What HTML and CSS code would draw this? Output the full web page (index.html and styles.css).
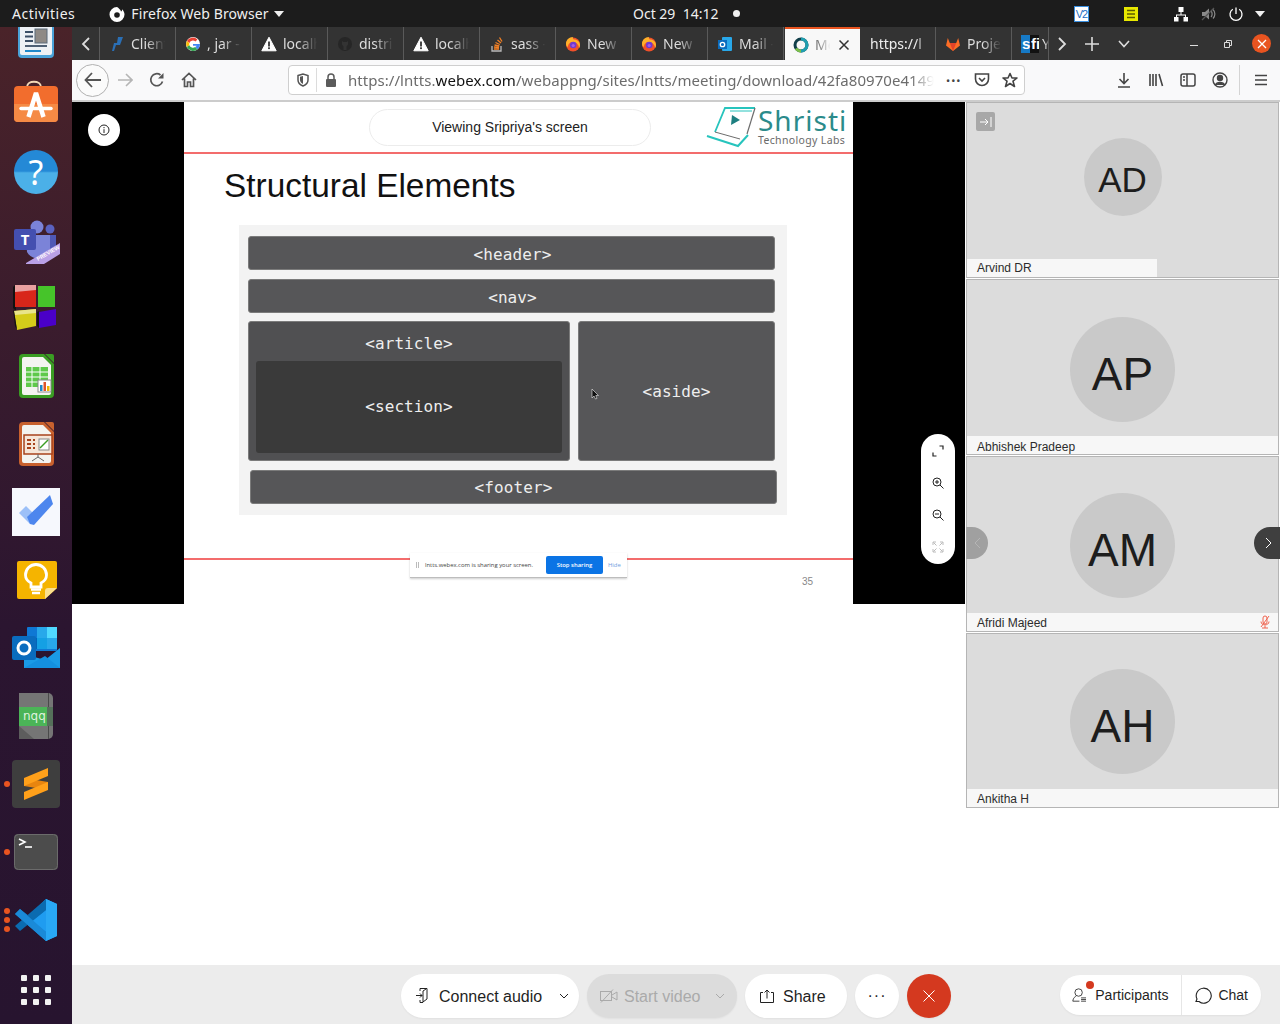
FILE: index.html
```html
<!DOCTYPE html>
<html lang="en">
<head>
<meta charset="utf-8">
<title>Webex meeting</title>
<link rel="stylesheet" href="styles.css">
</head>
<body>
<svg class="defs" width="0" height="0">
  <defs>
    <symbol id="warn" viewBox="0 0 16 16"><path d="M8 1.2 15.2 14.8H.8Z" fill="#fff" stroke="#fff" stroke-linejoin="round"/><rect x="7.1" y="5.5" width="1.8" height="5" fill="#333"/><rect x="7.1" y="11.3" width="1.8" height="1.8" fill="#333"/></symbol>
    <symbol id="fox" viewBox="0 0 16 16"><circle cx="8" cy="8.500" r="7" fill="#f0502a"/><path d="M1 8C1 4 4 1 8 1 7.500 2 8 3 9 3.500 12.500 3.500 15 6 15 9 15 10 14.800 11 14.300 12 13.500 8 11 6 8 6 5 6 3 8 3 11 1.800 10.500 1 9.500 1 8Z" fill="#ffb02a"/><circle cx="8.200" cy="9" r="3.300" fill="#6f3bd0"/><circle cx="8.200" cy="9.500" r="1.600" fill="#a55ce6"/></symbol>
    <symbol id="doc" viewBox="0 0 48 48"><path d="M11 2H32L42 12V42a4 4 0 0 1-4 4H11a4 4 0 0 1-4-4V6a4 4 0 0 1 4-4Z" fill="currentColor"/><path d="M11 5H31L39 13V41a2 2 0 0 1-2 2H12a2 2 0 0 1-2-2V7a2 2 0 0 1 2-2Z" fill="#f4f4f0"/><path d="M33 2H40a2 2 0 0 1 2 2V11Z" fill="currentColor"/></symbol>
  </defs>
</svg>
<div class="screen">
  <header class="topbar">
    <div class="top-left">
      <span class="top-text activities">Activities</span>
      <svg class="top-fox" width="16" height="16" viewBox="0 0 16 16"><path d="M8 1a7.500 7.500 0 1 0 7.500 7.500c0-2-1-4-2.500-5.300.3 1-.2 2-1 2.300C11.500 3.500 9.500 2 8 1Z" fill="#fff"/><circle cx="8" cy="9" r="2.800" fill="#1c1c1c"/></svg>
      <span class="top-text firefox-name">Firefox Web Browser</span>
      <span class="caret"></span>
    </div>
    <div class="top-center">
      <span class="top-text">Oct 29&nbsp; 14:12</span>
      <span class="rec-dot"></span>
    </div>
    <div class="top-right">
      <span class="tray-v2">V2</span>
      <svg class="tray-note" width="16" height="16" viewBox="0 0 16 16"><rect x="1" y="1" width="14" height="14" fill="#e8e800"/><path d="M4 4.500H12M4 8H12M4 11.500H12" stroke="#5c5c00" stroke-width="1.300"/></svg>
      <svg class="tray-net" width="16" height="16" viewBox="0 0 16 16" fill="#fff"><rect x="5.500" y="1" width="5" height="5"/><rect x="1" y="11" width="4.500" height="4.500"/><rect x="10.500" y="11" width="4.500" height="4.500"/><path d="M7.500 6h1v2.500H13V11h-1V9.500H4V11H3V8.500h4.500Z"/></svg>
      <svg class="tray-vol" width="16" height="16" viewBox="0 0 16 16"><path d="M1 6h3l4-3.500v11L4 10H1Z" fill="#8a8a8a"/><path d="M10 5c1.500 1.500 1.500 4.500 0 6M12 3.500c2.500 2.500 2.500 6.500 0 9" stroke="#8a8a8a" fill="none" stroke-width="1.200"/><path d="M1 14 13 2" stroke="#555" stroke-width="1.200"/></svg>
      <svg class="tray-pow" width="16" height="16" viewBox="0 0 16 16" fill="none" stroke="#fff" stroke-width="1.300"><path d="M8 1.500V8"/><path d="M4.800 3.300a6 6 0 1 0 6.400 0"/></svg>
      <span class="caret tray-caret"></span>
    </div>
  </header>

  <div class="desktop">
    <nav class="dock">
      <div class="dock-item"><svg width="48" height="48" viewBox="0 0 48 48"><rect x="6" y="-4" width="36" height="50" rx="4" fill="#4aa3d9"/><rect x="8" y="-4" width="32" height="47" rx="2" fill="#eef1f5"/><path d="M13 20H21M13 24.500H21M13 29H21" stroke="#3c4f66" stroke-width="1.800"/><rect x="23" y="17" width="12" height="14" fill="#8f8a86" stroke="#5a6a7a"/><path d="M13 34H35" stroke="#3c4f66" stroke-width="1.800"/><path d="M13 39H29" stroke="#1f88c9" stroke-width="2"/></svg></div>
      <div class="dock-item"><svg width="48" height="48" viewBox="0 0 48 48"><path d="M15 7C15 0 29 0 29 7" stroke="#f2d9b8" stroke-width="2" fill="none"/><rect x="2" y="6" width="44" height="36" rx="4" fill="#f26d2d"/><path d="M2 24H46V38a4 4 0 0 1-4 4H6a4 4 0 0 1-4-4Z" fill="#f58a45"/><path d="M16.500 37 24 13 31.500 37" stroke="#fff" stroke-width="4.500" fill="none" stroke-linejoin="bevel"/><path d="M9 28.500H39" stroke="#fff" stroke-width="3.500" stroke-linecap="round"/></svg></div>
      <div class="dock-item"><div class="help-icon">?</div></div>
      <div class="dock-item"><svg width="48" height="48" viewBox="0 0 48 48"><circle cx="25" cy="11" r="6.500" fill="#7b83d8"/><circle cx="38" cy="13" r="4.500" fill="#5a62c0"/><path d="M32 19H44V34L36 38Z" fill="#4f58b5"/><path d="M14 19H38V34C38 44 20 46 15 36Z" fill="#7b83d8"/><rect x="2" y="13" width="22" height="21" rx="2" fill="#444fb0"/><text class="dock-t" x="13" y="29" text-anchor="middle">T</text><path d="M14 47 48 27V38L32 48H14Z" fill="#b9a0e6"/><text class="dock-preview" transform="translate(26 45) rotate(-30)">PREVIEW</text></svg></div>
      <div class="dock-item"><svg width="48" height="48" viewBox="0 0 48 48"><path d="M1 3 3 1 4 27 1 24Z" fill="#111"/><rect x="3" y="1" width="21" height="22" fill="#d8261a"/><path d="M3 1H24V6L3 8Z" fill="#e9a0a0"/><rect x="26" y="2" width="17" height="21" fill="#46c42a"/><path d="M2 27 24 25V42L5 46Z" fill="#d4cc1a"/><path d="M2 27 24 25V29L3 31Z" fill="#e8e48a"/><path d="M1 25 2 27 5 46 3 42Z" fill="#111"/><path d="M25 28 27 27V44L25 42Z" fill="#111"/><path d="M27 28 44 25V41L27 44Z" fill="#4a00c8"/></svg></div>
      <div class="dock-item dock-calc"><svg width="48" height="48" viewBox="0 0 48 48"><use href="#doc"/><g fill="#5fc94a"><rect x="14" y="15" width="22" height="20"/></g><path d="M14 20H36M14 25H36M14 30H36M20 15V35M28 15V35" stroke="#fff"/><rect x="26" y="28" width="13" height="12" fill="#fff" stroke="#888"/><rect x="28" y="33" width="2.500" height="6" fill="#1f88c9"/><rect x="31.500" y="30" width="2.500" height="9" fill="#e0552b"/><rect x="35" y="34" width="2.500" height="5" fill="#f0b400"/></svg></div>
      <div class="dock-item dock-impress"><svg width="48" height="48" viewBox="0 0 48 48"><use href="#doc"/><rect x="12" y="15" width="28" height="19" fill="#f6e6d8" stroke="#a8431c" stroke-width="1.500"/><path d="M15 20H19M15 24H19M15 28H19M21 20H23M21 24H23M21 28H23" stroke="#a8431c" stroke-width="2"/><rect x="27" y="19" width="10" height="11" fill="#fff" stroke="#888"/><path d="M28 28 32 24 36 20" stroke="#3a9d23" stroke-width="1.500" fill="none"/><path d="M26 34V37M26 37 20 41M26 37 32 41" stroke="#666"/></svg></div>
      <div class="dock-item"><svg width="48" height="48" viewBox="0 0 48 48"><rect width="48" height="48" fill="#f6f8fd"/><path d="M7 25 14 18 25 29 18 36Z" fill="#9cc0f8"/><path d="M15 29 38 7 41 16 22 37 18 36Z" fill="#4d86ee"/></svg></div>
      <div class="dock-item"><svg width="48" height="48" viewBox="0 0 48 48"><path d="M7 5H43a2 2 0 0 1 2 2V32L33 43H7a2 2 0 0 1-2-2V7a2 2 0 0 1 2-2Z" fill="#f5b400"/><path d="M45 32H36a3 3 0 0 0-3 3V43Z" fill="#fbe08e"/><path d="M19 31V27C15 25 13.500 21.500 13.500 19A10.500 10.500 0 0 1 34.500 19C34.500 21.500 33 25 29 27V31Z" fill="none" stroke="#fff" stroke-width="2.800"/><path d="M19 33.500H29M20 37H28" stroke="#fff" stroke-width="2.500"/></svg></div>
      <div class="dock-item"><svg width="48" height="48" viewBox="0 0 48 48"><rect x="15" y="3" width="30" height="24" rx="1" fill="#0f78d4"/><rect x="25" y="3" width="10" height="11" fill="#28a8ea"/><rect x="35" y="3" width="10" height="11" fill="#50d9ff"/><rect x="15" y="14" width="10" height="11" fill="#0364b8"/><rect x="25" y="14" width="10" height="11" fill="#14a0e4"/><rect x="35" y="14" width="10" height="11" fill="#28a8ea"/><path d="M12 30 33 36 48 24V44H12Z" fill="#1a9be6"/><path d="M12 44 33 32 48 44Z" fill="#1490df"/><rect x="0" y="12" width="24" height="24" rx="2" fill="#0a6cbe"/><circle cx="12" cy="24" r="6" fill="none" stroke="#fff" stroke-width="3"/></svg></div>
      <div class="dock-item"><svg width="48" height="48" viewBox="0 0 48 48"><path d="M7 1H36A5 5 0 0 1 41 6V42A5 5 0 0 1 36 47H7Z" fill="#757575"/><path d="M7 34 22 47H7Z" fill="#5d5d5d"/><rect x="36" y="1" width="1" height="46" fill="#4a4a4a"/><rect x="7" y="15" width="34" height="19" fill="#4bb457"/><rect x="35" y="15" width="6" height="19" fill="#55705a"/><text class="dock-nqq" x="11" y="28">nqq</text></svg></div>
      <div class="dock-item"><svg width="48" height="48" viewBox="0 0 48 48"><rect width="48" height="48" rx="4" fill="#3e3e3e"/><path d="M12 18 12 26 36 30 36 22Z" fill="#e8850f"/><path d="M36 8 12 18V26L36 16Z" fill="#ffa01a"/><path d="M36 22 12 32V40L36 30Z" fill="#ffa01a"/></svg><span class="run-dot"></span></div>
      <div class="dock-item"><svg width="48" height="48" viewBox="0 0 48 48"><rect x="2" y="6" width="44" height="36" rx="4" fill="#4c4c4c"/><rect x="2.500" y="6.500" width="43" height="35" rx="4" fill="none" stroke="#6b6b6b"/><path d="M7 11 13 14 7 17" stroke="#fff" stroke-width="1.600" fill="none"/><path d="M13 19H20" stroke="#fff" stroke-width="1.600"/></svg><span class="run-dot"></span></div>
      <div class="dock-item"><svg width="48" height="48" viewBox="0 0 48 48"><path d="M34 3 45 8V40L34 45 12 25Z" fill="#1f9cf0"/><path d="M34 3 45 8V40L34 45Z" fill="#29a8f5"/><path d="M34 3V14L20 25 34 36V45L3 18 8 13 17 20Z" fill="#0f7cc8"/><path d="M3 30 8 35 34 14V3Z" fill="#0b6bb0"/><path d="M3 18 8 13 34 36V45Z" fill="#1a8ad8"/></svg><span class="run-dots"><i></i><i></i><i></i></span></div>
      <div class="dock-item dock-apps"><div class="apps-grid"><i></i><i></i><i></i><i></i><i></i><i></i><i></i><i></i><i></i></div></div>
    </nav>

    <div class="browser">
      <div class="tabbar">
        <div class="tab-scroll"><svg width="10" height="14" viewBox="0 0 10 14"><path d="M8 1 2 7 8 13" stroke="#ddd" stroke-width="1.800" fill="none"/></svg></div>
        <div class="tab"><svg width="16" height="16" viewBox="0 0 16 16"><path d="M9 1H14L11 9H7L5 15H3L5 7H8Z" fill="#2a6fb5"/></svg><span class="tab-label">Client</span></div>
        <div class="tab"><svg width="16" height="16" viewBox="0 0 16 16"><circle cx="8" cy="8" r="7" fill="#fff"/><path d="M8 4.500a3.500 3.500 0 0 1 2.400 1L12.500 3.400A7 7 0 0 0 1.800 5L4.400 7A3.500 3.500 0 0 1 8 4.500Z" fill="#ea4335"/><path d="M1.800 5a7 7 0 0 0 0 6L4.400 9.200a3.500 3.500 0 0 1 0-2.300Z" fill="#fbbc05"/><path d="M1.800 11A7 7 0 0 0 12.600 13.300L10.200 11A3.700 3.700 0 0 1 4.400 9.200Z" fill="#34a853"/><path d="M15 8H8V9.800H11.700A3.500 3.500 0 0 1 10.200 11L12.600 13.300C14.300 11.800 15 9.800 15 8Z" fill="#4285f4"/></svg><span class="tab-label">, jar -</span></div>
        <div class="tab"><svg width="16" height="16"><use href="#warn"/></svg><span class="tab-label">localh</span></div>
        <div class="tab"><svg width="16" height="16" viewBox="0 0 16 16"><circle cx="8" cy="8" r="7" fill="#262626"/><path d="M5 5 6.500 6H9.500L11 5V8.500L9.500 10.500V14H6.500V10.500L5 8.500Z" fill="#333"/></svg><span class="tab-label">distri</span></div>
        <div class="tab"><svg width="16" height="16"><use href="#warn"/></svg><span class="tab-label">localh</span></div>
        <div class="tab"><svg width="16" height="16" viewBox="0 0 16 16"><path d="M3 10V15H12V10" stroke="#bcbbbb" fill="none" stroke-width="1.300"/><path d="M5 13H10M5 11 10 11.500M5.500 9 10.300 10M6.500 6.500 10.800 8.500M8.500 4 12 7M10.500 1.500 13 5.500" stroke="#f48024" stroke-width="1.300"/></svg><span class="tab-label">sass -</span></div>
        <div class="tab"><svg width="16" height="16"><use href="#fox"/></svg><span class="tab-label">New</span></div>
        <div class="tab"><svg width="16" height="16"><use href="#fox"/></svg><span class="tab-label">New</span></div>
        <div class="tab"><svg width="16" height="16" viewBox="0 0 16 16"><rect x="5" y="1" width="10" height="14" rx="1" fill="#28a8ea"/><rect x="1" y="4" width="9" height="9" fill="#0a6cbe"/><circle cx="5.500" cy="8.500" r="2.200" fill="none" stroke="#fff" stroke-width="1.300"/></svg><span class="tab-label">Mail -</span></div>
        <div class="tab tab-active"><svg width="16" height="16" viewBox="0 0 16 16"><circle cx="8" cy="8" r="6" fill="none" stroke="#123f4a" stroke-width="3"/><path d="M8 2A6 6 0 0 1 14 8 6 6 0 0 1 8 14" fill="none" stroke="#1f9fb0" stroke-width="3"/><path d="M3 11.500A6 6 0 0 0 8 14" fill="none" stroke="#7cc04a" stroke-width="3"/></svg><span class="tab-label tab-label-short">Meet</span><svg class="tab-close" width="12" height="12" viewBox="0 0 12 12"><path d="M1.500 1.500 10.500 10.500M10.500 1.500 1.500 10.500" stroke="#333" stroke-width="1.500"/></svg></div>
        <div class="tab tab-noicon"><span class="tab-label">https://l</span></div>
        <div class="tab"><svg width="16" height="16" viewBox="0 0 16 16"><path d="M8 15 1 9.500 2.800 2 4.800 7H11.200L13.200 2 15 9.500Z" fill="#fc6d26"/><path d="M8 15 4.800 7H11.200Z" fill="#e24329"/></svg><span class="tab-label">Proje</span></div>
        <div class="tab tab-last"><svg width="18" height="18" viewBox="0 0 18 18"><rect x="0" y="0" width="9" height="18" fill="#1679c5"/><rect x="9" y="0" width="9" height="18" fill="#111"/><text class="sfi-text" x="1" y="14">s</text><text class="sfi-text" x="10" y="14">fi</text></svg><span class="tab-label">YouTube</span></div>
        <div class="tab-tools">
          <svg class="tool-next" width="10" height="14" viewBox="0 0 10 14"><path d="M2 1 8 7 2 13" stroke="#ddd" stroke-width="1.800" fill="none"/></svg>
          <svg class="tool-plus" width="14" height="14" viewBox="0 0 14 14"><path d="M7 0V14M0 7H14" stroke="#ddd" stroke-width="1.600"/></svg>
          <svg class="tool-list" width="12" height="8" viewBox="0 0 12 8"><path d="M1 1 6 6.500 11 1" stroke="#ddd" stroke-width="1.600" fill="none"/></svg>
          <svg class="tool-min" width="8" height="2" viewBox="0 0 8 2"><rect width="8" height="1" fill="#ddd"/></svg>
          <svg class="tool-max" width="8" height="8" viewBox="0 0 8 8"><path d="M.5 2.500H5.500V7.500H.5ZM2.500 2.500V.5H7.500V5.500H5.500" stroke="#ddd" fill="none"/></svg>
          <span class="tool-close"><svg width="10" height="10" viewBox="0 0 10 10"><path d="M1 1 9 9M9 1 1 9" stroke="#fff" stroke-width="1.300"/></svg></span>
        </div>
      </div>

      <div class="navbar">
        <span class="nav-back"><svg width="18" height="16" viewBox="0 0 18 16"><path d="M8 1 1.500 8 8 15M1.500 8H17" stroke="#555" stroke-width="1.800" fill="none"/></svg></span>
        <svg class="nav-fwd" width="16" height="14" viewBox="0 0 16 14"><path d="M9 1 15 7 9 13M15 7H1" stroke="#b5b5b5" stroke-width="1.600" fill="none"/></svg>
        <svg class="nav-reload" width="16" height="16" viewBox="0 0 16 16" fill="none"><path d="M13.500 9.500A6 6 0 1 1 11.500 3" stroke="#555" stroke-width="1.700"/><path d="M14.500 1V6.500H9" fill="#555"/></svg>
        <svg class="nav-home" width="16" height="16" viewBox="0 0 16 16" fill="none" stroke="#555" stroke-width="1.700"><path d="M1 8 8 1.500 15 8M3.500 6.500V14.500H6.500V10H9.500V14.500H12.500V6.500"/></svg>
        <div class="urlbar">
          <svg class="url-shield" width="12" height="14" viewBox="0 0 12 14"><path d="M1 2.500 6 1 11 2.500V7C11 10 8.500 12 6 13 3.500 12 1 10 1 7Z" fill="none" stroke="#555" stroke-width="1.500"/><path d="M6 3V11C4.500 10 3 9 3 7V3.800Z" fill="#555"/></svg>
          <span class="url-sep"></span>
          <svg class="url-lock" width="12" height="14" viewBox="0 0 12 14"><rect x="1" y="6" width="10" height="8" rx="1" fill="#5b5b5b"/><path d="M3 6.500V4A3 3 0 0 1 9 4V6.500" fill="none" stroke="#5b5b5b" stroke-width="1.500"/></svg>
          <span class="url-text">https://lntts.<b>webex.com</b>/webappng/sites/lntts/meeting/download/42fa80970e41491</span>
          <span class="url-more">•••</span>
          <svg class="url-pocket" width="16" height="14" viewBox="0 0 16 14" fill="none" stroke="#444" stroke-width="1.600"><path d="M1.500 1H14.500V6A6.500 6.500 0 0 1 1.500 6Z"/><path d="M5 5 8 8 11 5"/></svg>
          <svg class="url-star" width="16" height="16" viewBox="0 0 16 16"><path d="M8 1.500 10 6H15L11 9.200 12.500 14.500 8 11.500 3.500 14.500 5 9.200 1 6H6Z" fill="none" stroke="#444" stroke-width="1.600" stroke-linejoin="round"/></svg>
        </div>
        <div class="nav-tools">
          <svg width="16" height="16" viewBox="0 0 16 16" fill="none" stroke="#444" stroke-width="1.600"><path d="M8 1V11M3.500 7 8 11.500 12.500 7M2 15H14"/></svg>
          <svg width="16" height="16" viewBox="0 0 16 16" fill="none" stroke="#444" stroke-width="1.600"><path d="M2 2V14M5 2V14M8 2V14M11 2 14.500 14"/></svg>
          <svg width="16" height="16" viewBox="0 0 16 16" fill="none" stroke="#444" stroke-width="1.500"><rect x="1" y="2" width="14" height="12" rx="2"/><path d="M7 2V14M3 5H5M3 8H5"/></svg>
          <svg width="16" height="16" viewBox="0 0 16 16" fill="none" stroke="#444" stroke-width="1.400"><circle cx="8" cy="8" r="7"/><circle cx="8" cy="6" r="2.500" fill="#444"/><path d="M3.500 13C4.500 9.500 11.500 9.500 12.500 13" fill="#444"/></svg>
          <span class="nav-divider"></span>
          <svg class="nav-menu" width="14" height="12" viewBox="0 0 14 12"><path d="M1 1.500H13M1 6H13M1 10.500H13" stroke="#444" stroke-width="1.700"/></svg>
        </div>
      </div>

      <main class="webex">
        <div class="meeting">
          <section class="stage-column">
            <div class="stage">
              <div class="slide">
                <div class="slide-head">
                  <svg class="logo-mark" width="50" height="42" viewBox="0 0 50 42" fill="none"><path d="M9 26 19 2H49" stroke="#27c4bd" stroke-width="1.800"/><path d="M49 2 41 28" stroke="#6d6d6d" stroke-width="1.200"/><path d="M24 5H46" stroke="#27c4bd" stroke-width="1"/><path d="M26 9 34 14 25 19Z" fill="#1d7f80"/><path d="M1 30 32 40 42 29" stroke="#27c4bd" stroke-width="2"/><path d="M9 26 34 33" stroke="#6d6d6d" stroke-width="1"/></svg>
                  <div class="logo-text"><span class="logo-name">Shristi</span><span class="logo-sub">Technology Labs</span></div>
                </div>
                <h1 class="slide-title">Structural Elements</h1>
                <div class="diagram">
                  <div class="block block-wide">&lt;header&gt;</div>
                  <div class="block block-wide">&lt;nav&gt;</div>
                  <div class="block block-article"><div class="article-label">&lt;article&gt;</div><div class="block-section">&lt;section&gt;</div></div>
                  <div class="block block-aside">&lt;aside&gt;</div>
                  <div class="block block-wide block-footer">&lt;footer&gt;</div>
                </div>
                <div class="slide-foot"><span>35</span></div>
              </div>
              <button class="info-btn"><svg width="12" height="12" viewBox="0 0 12 12" fill="none" stroke="#222"><circle cx="6" cy="6" r="5"/><path d="M6 5.200V9M6 3V4.200"/></svg></button>
              <div class="viewing-pill">Viewing Sripriya's screen</div>
              <div class="share-bar"><span class="share-grip"></span><span class="share-msg">lntts.webex.com is sharing your screen.</span><span class="share-stop">Stop sharing</span><span class="share-hide">Hide</span></div>
              <svg class="remote-cursor" width="8" height="12" viewBox="0 0 8 12"><path d="M1 1V10L3 8 4.500 11 6 10.400 4.800 7.500H7.500Z" fill="#111" stroke="#eee" stroke-width=".6"/></svg>
              <div class="zoom-ctl">
                <svg width="12" height="12" viewBox="0 0 12 12" fill="none" stroke="#222" stroke-width="1.200"><path d="M1 7.500V11H4.500M7.500 1H11V4.500"/></svg>
                <svg width="12" height="12" viewBox="0 0 12 12" fill="none" stroke="#222"><circle cx="5" cy="5" r="4"/><path d="M8 8 11.500 11.500M3 5H7M5 3V7"/></svg>
                <svg width="12" height="12" viewBox="0 0 12 12" fill="none" stroke="#222"><circle cx="5" cy="5" r="4"/><path d="M8 8 11.500 11.500M3 5H7"/></svg>
                <svg width="12" height="12" viewBox="0 0 12 12" fill="none" stroke="#bbb"><path d="M1 4V1H4M8 1H11V4M11 8V11H8M4 11H1V8M1.500 1.500 4.500 4.500M10.500 1.500 7.500 4.500M10.500 10.500 7.500 7.500M1.500 10.500 4.500 7.500"/></svg>
              </div>
            </div>
          </section>
          <aside class="panel">
            <div class="tile tile-first">
              <span class="collapse-btn"><svg width="12" height="10" viewBox="0 0 12 10" fill="none" stroke="#fff"><path d="M0 5H8M5 2 8 5 5 8M11 0V10"/></svg></span>
              <div class="avatar avatar-small">AD</div>
              <div class="tile-name tile-name-short">Arvind DR</div>
            </div>
            <div class="tile tile-second">
              <div class="avatar">AP</div>
              <div class="tile-name tile-name-low">Abhishek Pradeep</div>
            </div>
            <div class="tile tile-third">
              <div class="avatar">AM</div>
              <div class="tile-name">Afridi Majeed<svg class="mute-icon" width="10" height="14" viewBox="0 0 10 14" fill="none" stroke="#f0634f"><rect x="3" y="1" width="4" height="8" rx="2"/><path d="M1 6.500C1 11 9 11 9 6.500M5 10.500V13M2 13H8M1 12 9 1"/></svg></div>
            </div>
            <div class="tile tile-fourth">
              <div class="avatar">AH</div>
              <div class="tile-name">Ankitha H</div>
            </div>
            <span class="page-arrow page-prev"><svg width="8" height="12" viewBox="0 0 8 12"><path d="M7 1 2 6 7 11" stroke="#b5b5b5" fill="none"/></svg></span>
            <span class="page-arrow page-next"><svg width="8" height="12" viewBox="0 0 8 12"><path d="M1 1 6 6 1 11" stroke="#fff" fill="none"/></svg></span>
          </aside>
        </div>

        <footer class="toolbar">
          <div class="pill pill-audio">
            <svg width="16" height="18" viewBox="0 0 16 18" fill="none" stroke="#222"><path d="M5 4V1.500H12V12L8 15V4L11 2M1 8.500H7M5 6.500 7 8.500 5 10.500M5 13V15.500H8"/></svg>
            <span class="pill-text">Connect audio</span>
            <svg class="chev" width="10" height="6" viewBox="0 0 10 6"><path d="M1 1 5 5 9 1" stroke="#222" fill="none"/></svg>
          </div>
          <div class="pill pill-video">
            <svg width="18" height="14" viewBox="0 0 18 14" fill="none" stroke="#aaa"><rect x=".5" y="2.500" width="11" height="9"/><path d="M12 6 17 3V11L12 8M1 13.500 13 .5"/></svg>
            <span class="pill-text">Start video</span>
            <svg class="chev" width="10" height="6" viewBox="0 0 10 6"><path d="M1 1 5 5 9 1" stroke="#aaa" fill="none"/></svg>
          </div>
          <div class="pill pill-share">
            <svg width="16" height="14" viewBox="0 0 16 14" fill="none" stroke="#222"><path d="M4 3.500H1.500V13.500H14.500V3.500H12M8 9.500V1M5.500 3.500 8 1 10.500 3.500"/></svg>
            <span class="pill-text">Share</span>
          </div>
          <div class="pill pill-round">···</div>
          <div class="pill pill-round pill-end"><svg width="12" height="12" viewBox="0 0 12 12"><path d="M.5 .5 11.500 11.500M11.500 .5 .5 11.500" stroke="#fff"/></svg></div>
          <div class="side-pills">
            <div class="side-btn side-participants">
              <span class="alert-dot"></span>
              <svg width="18" height="18" viewBox="0 0 18 18" fill="none" stroke="#222"><circle cx="8" cy="6" r="4.500"/><path d="M1 16.500C1.500 12 4 11 5 10.500M1 16.500H9M11 12.500H17M11 14.500H17M11 16.500H17"/></svg>
              <span>Participants</span>
            </div>
            <div class="side-btn">
              <svg width="18" height="18" viewBox="0 0 18 18" fill="none" stroke="#222" stroke-width="1.100"><path d="M5 15.500H2L3 13A7.500 7.500 0 1 1 5 15.500Z"/></svg>
              <span>Chat</span>
            </div>
          </div>
        </footer>
      </main>
    </div>
  </div>
</div>
</body>
</html>
```

FILE: styles.css
```css
* { box-sizing: border-box; }
html, body { margin: 0; padding: 0; background: #fff; }
.defs { position: absolute; }
.screen { width: 1280px; height: 1024px; display: flex; flex-direction: column; overflow: hidden; font-family: "Liberation Sans", Arial, sans-serif; }

/* Top bar */
.topbar { height: 27px; flex: none; background: #1c1c1c; display: grid; grid-template-columns: 633px auto 1fr; align-items: center; position: relative; z-index: 2; }
.top-text { font-family: "Noto Sans", sans-serif; font-size: 14px; color: #f0f0f0; white-space: nowrap; }
.top-left { display: flex; align-items: center; padding-left: 12px; }
.activities { margin-right: 34px; letter-spacing: .5px; }
.firefox-name { letter-spacing: .1px; }
.top-fox { margin-right: 6px; }
.caret { width: 0; height: 0; border-left: 5px solid transparent; border-right: 5px solid transparent; border-top: 6px solid #f0f0f0; margin-left: 5px; }
.top-center { display: flex; align-items: center; }
.rec-dot { width: 7px; height: 7px; border-radius: 50%; background: #f0f0f0; margin-left: 15px; }
.top-right { display: flex; align-items: center; justify-content: flex-end; padding-right: 15px; }
.tray-v2 { width: 15px; height: 16px; background: #fff; border: 1px solid #3a8fe0; color: #1d6fc4; font-size: 11px; line-height: 14px; text-align: center; margin-right: 34px; letter-spacing: -1px; }
.tray-note { margin-right: 34px; }
.tray-net { margin-right: 12px; }
.tray-vol { margin-right: 11px; }
.tray-pow { margin-right: 11px; }
.tray-caret { margin-left: 0; }

.desktop { flex: 1; display: flex; min-height: 0; }

/* Dock */
.dock { width: 72px; flex: none; height: 997px; display: flex; flex-direction: column; justify-content: flex-end; padding-bottom: 2px; overflow: hidden; background: linear-gradient(180deg, #4a2329 0%, #3a1c2d 30%, #2b1530 60%, #27142f 100%); }
.dock-item { height: 68px; flex: none; display: flex; align-items: center; justify-content: center; position: relative; }
.dock-calc { color: #3a9d23; }
.dock-impress { color: #c8612e; }
.help-icon { width: 44px; height: 44px; border-radius: 50%; background: linear-gradient(180deg, #2489d6 0%, #2489d6 48%, #4bb0e8 52%, #4bb0e8 100%); color: #fff; font-size: 34px; line-height: 44px; text-align: center; font-family: "Noto Sans", sans-serif; }
.dock-t { font: bold 15px "Noto Sans", sans-serif; fill: #fff; }
.dock-preview { font: bold 5.500px "Liberation Sans", sans-serif; fill: #fff; }
.dock-nqq { font: 12px "DejaVu Sans", sans-serif; fill: #dff2df; }
.run-dot { position: absolute; left: 4px; top: 31px; width: 6px; height: 6px; border-radius: 50%; background: #e95420; }
.run-dots { position: absolute; left: 4px; top: 22px; display: flex; flex-direction: column; gap: 3px; }
.run-dots i { display: block; width: 6px; height: 6px; border-radius: 50%; background: #e95420; }
.apps-grid { display: grid; grid-template-columns: repeat(3, 6px); gap: 6px; margin-top: 4px; }
.apps-grid i { display: block; width: 6px; height: 6px; border-radius: 1px; background: #f2f2f2; }

/* Browser */
.browser { flex: 1; min-width: 0; display: flex; flex-direction: column; }
.tabbar { height: 33px; flex: none; background: #333333; display: flex; align-items: stretch; color: #ddd; font-family: "Noto Sans", sans-serif; font-size: 14px; }
.tab-scroll { width: 28px; display: flex; align-items: center; justify-content: center; border-right: 1px solid #5a5a5a; }
.tab { width: 76px; flex: none; display: flex; align-items: center; gap: 6px; padding-left: 9px; border-right: 1px solid #5a5a5a; overflow: hidden; }
.tab svg { flex: none; }
.tab-label { flex: 1; white-space: nowrap; overflow: hidden; padding-right: 9px; -webkit-mask-image: linear-gradient(90deg, #000 35%, transparent 78%); mask-image: linear-gradient(90deg, #000 35%, transparent 78%); }
.tab-active { background: #f8f8f8; color: #777; border-top: 2px solid #e95420; border-right: 0; margin-left: 1px; width: 75px; padding-right: 10px; padding-left: 8px; }
.tab-label-short { padding-right: 0; -webkit-mask-image: linear-gradient(90deg, #000 20%, transparent 90%); mask-image: linear-gradient(90deg, #000 20%, transparent 90%); }
.tab-noicon { padding-left: 10px; color: #eee; width: 76px; }
.tab-noicon .tab-label { -webkit-mask-image: linear-gradient(90deg, #000 70%, transparent 92%); mask-image: linear-gradient(90deg, #000 70%, transparent 92%); }
.tab-last { width: 37px; padding-left: 9px; border-right: 1px solid #5a5a5a; gap: 3px; }
.sfi-text { font: bold 15px "Liberation Sans", sans-serif; fill: #fff; }
.tab-tools { flex: 1; display: flex; align-items: center; }
.tool-next { margin-left: 8px; }
.tool-plus { margin-left: 18px; }
.tool-list { margin-left: 19px; }
.tool-min { margin-left: 60px; margin-top: 5px; }
.tool-max { margin-left: 26px; }
.tool-close { margin-left: 20px; width: 19px; height: 19px; border-radius: 50%; background: #e95420; display: flex; align-items: center; justify-content: center; }

.navbar { height: 42px; flex: none; background: #f9f9fa; border-bottom: 2px solid #cccccc; display: flex; align-items: center; position: relative; padding-left: 4px; }
.nav-back { width: 33px; height: 33px; border-radius: 50%; border: 1px solid #b1b1b1; display: flex; align-items: center; justify-content: center; flex: none; background: #fbfbfb; }
.nav-fwd { margin-left: 8px; flex: none; }
.nav-reload { margin-left: 16px; flex: none; }
.nav-home { margin-left: 16px; flex: none; }
.urlbar { width: 737px; height: 30px; flex: none; margin-left: 91px; background: #fff; border: 1px solid #cfcfcf; border-radius: 4px; display: flex; align-items: center; padding-left: 8px; font-family: "Noto Sans", sans-serif; font-size: 15px; color: #6c6c6c; }
.url-sep { width: 1px; height: 24px; background: #dcdcdc; margin-left: 7px; }
.url-lock { margin-left: 8px; flex: none; }
.url-text { width: 586px; margin-left: 11px; white-space: nowrap; overflow: hidden; letter-spacing: .05px; -webkit-mask-image: linear-gradient(90deg, #000 96%, transparent 100%); mask-image: linear-gradient(90deg, #000 96%, transparent 100%); }
.url-text b { font-weight: 400; color: #111; }
.url-more { margin-left: 12px; font-size: 11px; color: #444; letter-spacing: 1px; }
.url-pocket { margin-left: 13px; flex: none; }
.url-star { margin-left: 12px; flex: none; }
.nav-tools { margin-left: 91px; display: flex; align-items: center; gap: 16px; }
.nav-divider { width: 1px; height: 30px; background: #d4d4d4; margin-left: -5px; margin-right: -2px; }
.nav-menu { margin-left: 0; }

/* Webex */
.webex { flex: 1; min-height: 0; display: flex; flex-direction: column; }
.meeting { flex: 1; min-height: 0; display: flex; background: #fff; }
.stage-column { width: 893px; flex: none; }
.stage { height: 502px; background: #000; display: flex; justify-content: center; position: relative; overflow: hidden; }
.slide { width: 669px; height: 502px; background: #fff; display: flex; flex-direction: column; }
.slide-head { height: 52px; flex: none; border-bottom: 2px solid #f36c6c; display: flex; justify-content: flex-end; align-items: flex-start; padding-right: 8px; padding-top: 4px; }
.logo-mark { flex: none; margin-right: 2px; }
.logo-text { display: flex; flex-direction: column; width: 87px; }
.logo-name { font-family: "Noto Sans", sans-serif; font-size: 28px; line-height: 28px; color: #2b8b8b; letter-spacing: 1px; white-space: nowrap; }
.logo-sub { font-family: "Noto Sans", sans-serif; font-size: 10.500px; line-height: 12px; color: #6a6a6a; white-space: nowrap; letter-spacing: .35px; }
.slide-title { margin: 12px 0 0 40px; font-family: "Liberation Sans", Arial, sans-serif; font-weight: 400; font-size: 33.400px; line-height: 40px; color: #111; }
.diagram { width: 548px; height: 290px; margin: 19px 0 0 55px; background: #f3f3f3; padding: 11px 0 0 9px; display: grid; grid-template-columns: 322px 197px; grid-template-rows: 34px 34px 139px 34px; column-gap: 8px; row-gap: 9px; font-family: "DejaVu Sans Mono", monospace; font-size: 16px; letter-spacing: .1px; color: #eeeeee; }
.block { background: #565658; border: 1px solid #7b7b7b; border-radius: 3px; display: flex; align-items: center; justify-content: center; padding: 2px 0 0 2px; }
.block-wide { grid-column: 1 / 3; }
.block-article { margin-top: -1px; flex-direction: column; align-items: stretch; background: #505052; padding: 0; }
.article-label { flex: 1; display: flex; align-items: center; justify-content: center; padding-top: 4px; }
.block-section { height: 92px; margin: 0 7px 7px; background: #3a3a3a; border-radius: 3px; display: flex; align-items: center; justify-content: center; flex: none; padding-bottom: 2px; }
.block-aside { margin-top: -1px; padding: 0; }
.block-footer { margin: 0 -2px 0 2px; padding: 0; }
.slide-foot { margin-top: 43px; height: 45px; border-top: 2px solid #f36c6c; display: flex; justify-content: flex-end; padding: 16px 40px 0 0; font-size: 10px; color: #888; }

.info-btn { position: absolute; left: 16px; top: 12px; width: 32px; height: 32px; border-radius: 50%; background: #fff; border: 0; padding: 0; display: flex; align-items: center; justify-content: center; }
.viewing-pill { position: absolute; left: 297px; top: 7px; width: 282px; height: 37px; border-radius: 19px; background: #fff; border: 1px solid #ececec; font-size: 14px; line-height: 35px; text-align: center; color: #222; }
.share-bar { position: absolute; left: 338px; top: 451px; width: 217px; height: 25px; background: #fff; border-bottom: 1px solid #bdbdbd; box-shadow: 0 1px 2px rgba(0,0,0,.2); display: flex; align-items: center; font-family: "Open Sans", sans-serif; font-size: 5.900px; color: #444; padding-left: 6px; }
.share-grip { height: 6px; border-left: 1px solid #bbb; border-right: 1px solid #bbb; margin-right: 6px; box-sizing: content-box; width: 1px; }
.share-msg { white-space: nowrap; width: 121px; }
.share-stop { width: 57px; height: 18px; background: #0b74e5; border-radius: 2px; color: #fff; font-weight: 600; line-height: 18px; text-align: center; }
.share-hide { margin-left: 5px; color: #6f9de0; }
.remote-cursor { position: absolute; left: 519px; top: 286px; }
.zoom-ctl { position: absolute; left: 849px; top: 332px; width: 34px; height: 130px; border-radius: 17px; background: #fff; display: flex; flex-direction: column; align-items: center; justify-content: space-between; padding: 11px 0; }

.panel { width: 313px; margin-left: 1px; flex: none; display: flex; flex-direction: column; gap: 1px; position: relative; align-self: flex-start; }
.tile { height: 176px; background: #dcdcdc; border: 1px solid #b5b5b5; position: relative; display: flex; align-items: center; justify-content: center; }
.tile-first { padding-bottom: 26px; }
.tile-second { padding-top: 4px; }
.tile-third { padding-top: 2px; }
.tile-fourth { height: 175px; padding-top: 2px; }
.avatar { width: 105px; height: 105px; border-radius: 50%; background: #c9c9c9; color: #1d1d1d; font-size: 46px; display: flex; align-items: center; justify-content: center; padding-top: 9px; }
.avatar-small { width: 78px; height: 78px; font-size: 35px; padding-top: 6px; }
.tile-name { position: absolute; left: 0; right: 0; bottom: 0; height: 18px; background: #f7f7f7; font-size: 12px; line-height: 21px; padding-left: 10px; color: #2c2c2c; }
.tile-name-short { right: auto; width: 190px; line-height: 19px; }
.tile-name-low { line-height: 23px; overflow: hidden; }
.mute-icon { position: absolute; right: 8px; top: 2px; }
.collapse-btn { position: absolute; left: 9px; top: 9px; width: 19px; height: 19px; background: #a8a8a8; border-radius: 2px; display: flex; align-items: center; justify-content: center; }
.page-arrow { position: absolute; top: 425px; height: 32px; display: flex; align-items: center; justify-content: center; }
.page-prev { left: 0; width: 22px; background: #a0a0a0; border-radius: 0 16px 16px 0; }
.page-next { right: -1px; width: 26px; background: #3f3f3f; border-radius: 16px 0 0 16px; padding-left: 3px; }

.toolbar { height: 59px; flex: none; background: #ececec; display: flex; align-items: flex-start; gap: 8px; padding: 9px 19px 0 329px; font-size: 16px; color: #1f1f1f; }
.pill { height: 44px; border-radius: 22px; background: #fff; display: flex; align-items: center; flex: none; box-shadow: 0 1px 2px rgba(0,0,0,.05); }
.pill-text { padding-top: 2px; }
.pill-audio { width: 178px; padding-left: 14px; gap: 8px; }
.pill-video { width: 150px; padding-left: 13px; gap: 6px; background: #dcdcdc; color: #aaa; }
.pill-audio .chev { margin-left: 9px; }
.pill-video .chev { margin-left: 9px; }
.pill-share { width: 102px; padding-left: 14px; gap: 8px; }
.pill-round { width: 44px; justify-content: center; letter-spacing: 1px; font-size: 16px; }
.pill-end { background: #d4391f; }
.side-pills { margin-left: auto; height: 40px; margin-top: 1px; border-radius: 20px; background: #fff; display: flex; font-size: 14px; box-shadow: 0 1px 2px rgba(0,0,0,.05); }
.side-btn { display: flex; align-items: center; gap: 6px; padding: 0 13px 0 12px; position: relative; }
.side-participants { width: 122px; border-right: 1px solid #e6e6e6; gap: 8px; }
.alert-dot { position: absolute; left: 26px; top: 6px; width: 8px; height: 8px; border-radius: 50%; background: #d4391f; }
```
